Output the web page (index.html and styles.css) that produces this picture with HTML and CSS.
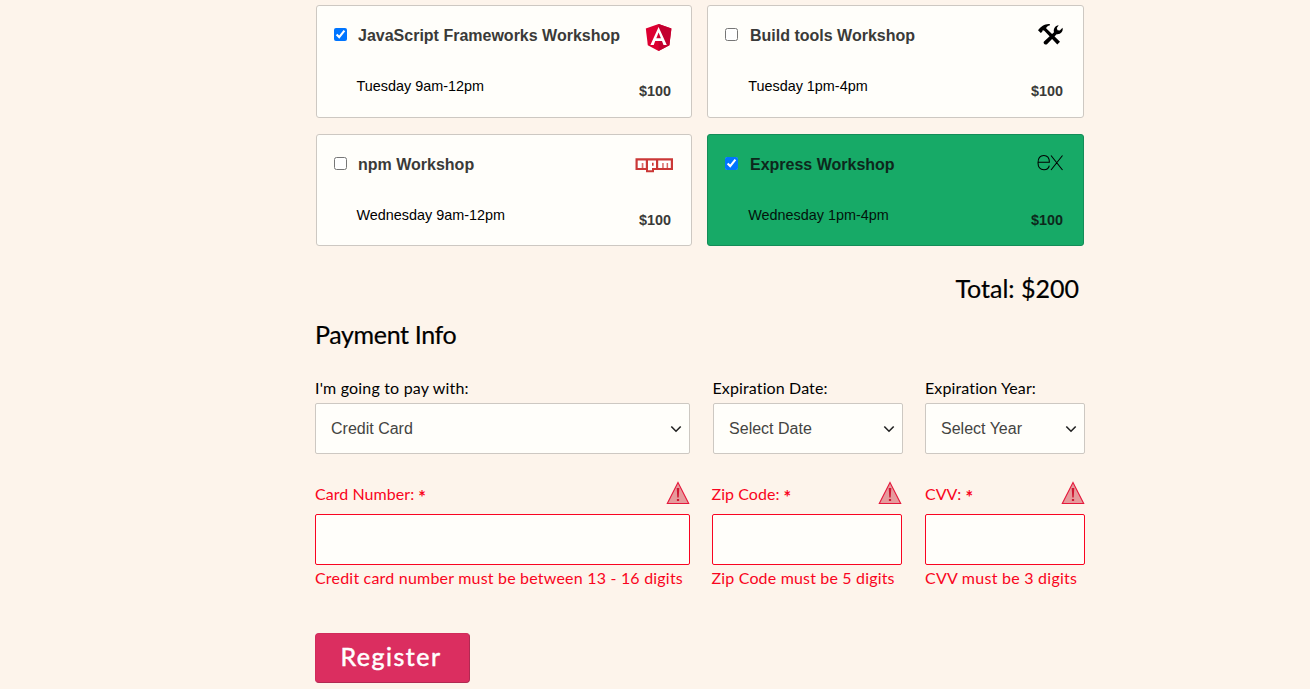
FILE: index.html
```html
<!DOCTYPE html>
<html lang="en">
<head>
<meta charset="utf-8">
<title>Register</title>
<link rel="stylesheet" href="styles.css">
</head>
<body>
<form class="form">
  <div class="workshops">
    <label class="card">
      <span class="card-top">
        <input type="checkbox" checked>
        <span class="title">JavaScript Frameworks Workshop</span>
        <svg class="icon" viewBox="0 0 44 30"><path fill="#dd0031" d="M27.6 2 40.4 6.5 38.4 23.2 27.6 29 16.8 23.2 14.8 6.5z"/><path fill="#c3002f" d="M27.6 2 40.4 6.5 38.4 23.2 27.6 29z"/><path fill="#fff" fill-rule="evenodd" d="M27.6 5 35.8 23H32.5L31 19H24.2L22.7 23H19.4zM27.6 10.6 25.3 16.2H29.9z"/></svg>
      </span>
      <span class="card-bottom"><span class="time">Tuesday 9am-12pm</span><b class="price">$100</b></span>
    </label>
    <label class="card right">
      <span class="card-top">
        <input type="checkbox">
        <span class="title">Build tools Workshop</span>
        <svg class="icon" viewBox="0 0 44 30"><path d="M15 8.2C18 4.6 22 1.6 26.7 2.1L27 3.2C24.5 3.6 23.6 4.8 23.1 6.3L37 19.8 34.3 22.5 21.3 8.8C19.8 7.4 19.2 8.5 19.3 9.7L17.8 11.1z"/><path d="M21 19.5 31 10.3C30.1 7.2 32 3.8 35.7 3.3L33.8 6 34.5 8.2 36.8 8.5 39.5 5.8C40.6 9.4 37.4 12.8 33.6 12.2L24 22.2C22.2 23.5 19.7 21.2 21 19.5z"/></svg>
      </span>
      <span class="card-bottom"><span class="time">Tuesday 1pm-4pm</span><b class="price">$100</b></span>
    </label>
    <label class="card second">
      <span class="card-top">
        <input type="checkbox">
        <span class="title">npm Workshop</span>
        <svg class="icon" viewBox="0 0 44 30"><path fill="#cb3837" d="M4.5 7.3H42V19H23V21.2H15V19H4.5z"/><path fill="#fff" d="M6.7 9.6H14.8V17H6.7zM27.2 9.6H39.8V17H27.2z"/><path fill="#fff" fill-rule="evenodd" d="M17 9.6H25V17H21V19.2H17zM21 11.8V14.8H22.6V11.8z"/><path fill="#d96a68" d="M10.7 12H12.4V17H10.7zM31.2 12H32.7V17H31.2zM35.6 12H37.1V17H35.6z"/></svg>
      </span>
      <span class="card-bottom"><span class="time">Wednesday 9am-12pm</span><b class="price">$100</b></span>
    </label>
    <label class="card right second active">
      <span class="card-top">
        <input type="checkbox" checked>
        <span class="title">Express Workshop</span>
        <svg class="icon" viewBox="0 0 44 30"><path fill="none" stroke="#000" stroke-width="1.05" d="M15 11.2H26.4C26.5 6.8 24.2 4.5 20.9 4.5 17.2 4.5 15 7.4 15 11.8 15 16.2 17.4 18.7 21 18.7 23.7 18.7 25.7 17.3 26.3 14.6M28 4.5 39.5 19M39.5 4.5 28 19"/></svg>
      </span>
      <span class="card-bottom"><span class="time">Wednesday 1pm-4pm</span><b class="price">$100</b></span>
    </label>
  </div>

  <div class="total">Total: $200</div>
  <h2 class="heading">Payment Info</h2>

  <div class="fields">
    <div class="field"><label class="label pay">I'm going to pay with:</label>
      <div class="select">Credit Card<svg class="chevron" viewBox="0 0 12 8"><path d="M1.3 1.5 6 6.2 10.7 1.5"/></svg></div></div>
    <div class="field"><label class="label">Expiration Date:</label>
      <div class="select select-date">Select Date<svg class="chevron" viewBox="0 0 12 8"><path d="M1.3 1.5 6 6.2 10.7 1.5"/></svg></div></div>
    <div class="field"><label class="label">Expiration Year:</label>
      <div class="select">Select Year<svg class="chevron" viewBox="0 0 12 8"><path d="M1.3 1.5 6 6.2 10.7 1.5"/></svg></div></div>
  </div>

  <div class="fields errors">
    <div class="field"><label class="label"><span>Card Number: <i>*</i></span>
      <svg class="warn" viewBox="0 0 24 26"><path d="M12 2.5 22.7 23.5H1.3z"/><path class="mark" d="M10.7 8H13.3L12.7 17.5H11.3zM10.9 19H13.1V21H10.9z"/></svg></label>
      <input class="input" type="text"><p class="message card-message">Credit card number must be between 13 - 16 digits</p></div>
    <div class="field"><label class="label"><span>Zip Code: <i>*</i></span>
      <svg class="warn" viewBox="0 0 24 26"><path d="M12 2.5 22.7 23.5H1.3z"/><path class="mark" d="M10.7 8H13.3L12.7 17.5H11.3zM10.9 19H13.1V21H10.9z"/></svg></label>
      <input class="input" type="text"><p class="message">Zip Code must be 5 digits</p></div>
    <div class="field"><label class="label"><span>CVV: <i>*</i></span>
      <svg class="warn" viewBox="0 0 24 26"><path d="M12 2.5 22.7 23.5H1.3z"/><path class="mark" d="M10.7 8H13.3L12.7 17.5H11.3zM10.9 19H13.1V21H10.9z"/></svg></label>
      <input class="input" type="text"><p class="message cvv-message">CVV must be 3 digits</p></div>
  </div>

  <button class="register" type="button">Register</button>
</form>
</body>
</html>
```
FILE: styles.css
```css
* { box-sizing: border-box; }
body { margin: 0; background: #fdf4eb; font-family: Lato, sans-serif; font-size: 16px; font-variant-ligatures: none; color: #000; overflow: hidden; }
.form { width: 770px; margin-left: 315px; padding-top: 5px; }

.workshops { display: grid; grid-template-columns: 376px 377px; grid-template-rows: 113px 112px; gap: 16px 15px; padding-left: 1px; }
.card { display: flex; flex-direction: column; justify-content: space-between; padding: 16px 16px 15px 17px; border: 1px solid #cdc8c2; border-radius: 3px; background: #fffefa; font-family: "Liberation Sans", sans-serif; }
.card.second { padding-bottom: 14px; }
.card.active { background: #17aa67; border-color: #148c58; }
.card-top { display: flex; height: 30px; align-items: flex-start; }
.card-top input { width: 13px; height: 13px; margin: 6px 11px 0 0; }
.right .card-top input { margin-right: 12px; }
.title { flex: 1; font-size: 16px; font-weight: bold; line-height: 28px; color: #3a3a38; white-space: nowrap; }
.active .title, .active .price { color: #0d281c; }
.icon { width: 44px; height: 30px; flex: none; }
.card-bottom { display: flex; justify-content: space-between; height: 26px; padding: 0 4px 0 22.5px; }
.right .card-bottom { padding-left: 23.2px; }
.time { font-size: 14.4px; line-height: 20px; }
.price { font-size: 14.4px; line-height: 20px; margin-top: 5px; color: #3a3a38; }
.active .time { color: #03130b; }

.total { height: 38px; margin-top: 23px; padding-right: 6px; text-align: right; font-size: 25px; line-height: 38px; -webkit-text-stroke: 0.2px; }
.heading { margin: 8px 0 0; height: 38px; font-size: 25px; font-weight: 400; line-height: 38px; letter-spacing: -0.35px; -webkit-text-stroke: 0.2px; }

.fields { display: grid; grid-template-columns: 375px 190px 160px; column-gap: 22.5px; margin-top: 24px; }
.label { display: flex; justify-content: space-between; height: 26px; line-height: 22px; white-space: nowrap; letter-spacing: 0.12px; }
.pay { letter-spacing: 0.18px; }
.select { display: flex; justify-content: space-between; align-items: center; height: 51px; padding: 0 7px 0 15px; border: 1px solid #cdc8c2; border-radius: 2px; background: #fffefa; font-family: "Liberation Sans", sans-serif; font-size: 16px; color: #444442; }
.select-date { padding-left: 15.6px; }
.chevron { width: 12px; height: 8px; fill: none; stroke: #222; stroke-width: 1.6; }

.errors { column-gap: 0; justify-content: space-between; margin-top: 26px; color: #f90421; }
.errors .field:nth-child(2) { margin: 0 1px 0 -1px; }
.errors .label { height: 34px; line-height: 28px; letter-spacing: 0.05px; }
.label i { font-size: 18px; font-style: normal; font-weight: bold; line-height: 1; vertical-align: -4px; }
.warn { width: 24px; height: 26px; fill: #e69a9c; stroke: #e5183c; stroke-width: 1.1; }
.warn .mark { fill: #cf1732; stroke: none; }
.input { display: block; width: 100%; height: 51px; border: 1px solid #f90421; border-radius: 2px; background: #fffefa; }
.message { margin: 1px 0 0; line-height: 24px; white-space: nowrap; letter-spacing: 0.17px; }
.card-message { letter-spacing: 0.2px; }
.cvv-message { letter-spacing: 0.25px; }

.register { display: block; width: 155px; height: 50px; margin-top: 43px; padding: 0 3px 4px 0; border: 1px solid #d12c5b; border-bottom-color: #b02a52; border-right-color: #b02a52; border-radius: 4px; background: #db2e60; color: #fff; font-family: Lato, sans-serif; font-size: 25px; letter-spacing: 1.5px; -webkit-text-stroke: 0.5px; }
```
